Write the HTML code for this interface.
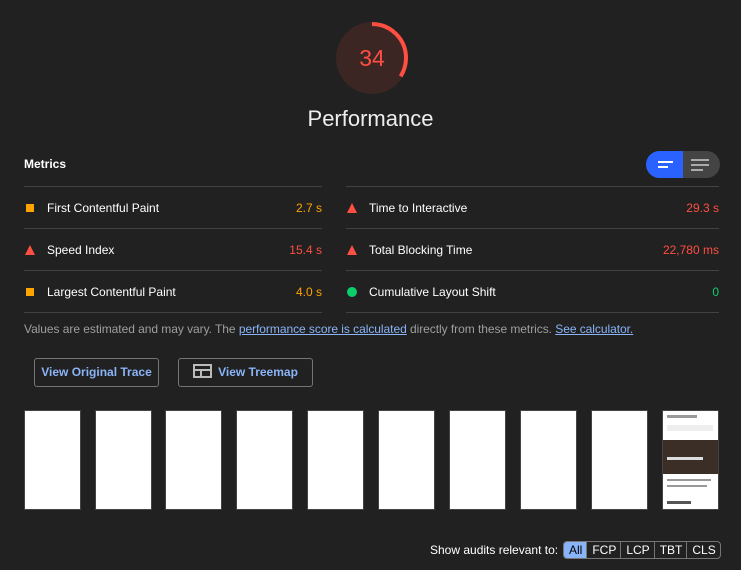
<!DOCTYPE html>
<html><head><style>
body{margin:0;width:741px;height:570px;background:#212121;font-family:"Liberation Sans",sans-serif;color:#fff;position:relative;overflow:hidden}
.a{position:absolute}
.row{position:absolute;font-size:12px;height:42px;line-height:42px;border-top:1px solid #424242}
.lbl{position:absolute;left:23px}
.val{position:absolute;right:0}
.sq{position:absolute;left:2px;top:17px;width:8px;height:8px;background:#ffa400}
.tri{position:absolute;left:1px;top:16px;width:0;height:0;border-left:5px solid transparent;border-right:5px solid transparent;border-bottom:10px solid #ff4e42}
.dot{position:absolute;left:1px;top:16px;width:10px;height:10px;border-radius:50%;background:#0cce6b}
.btn{position:absolute;border:1px solid #757575;border-radius:3px;color:#8ab4f8;font-weight:bold;font-size:12px;line-height:27px;text-align:center}
.fr{position:absolute;top:410px;width:55px;height:98px;background:#fff;border:1px solid #444}
.fb{display:inline-block;padding:0 4px 0 5px;border-left:1px solid #757575;line-height:16px}
</style></head><body>
<svg class="a" style="left:334px;top:20px" width="76" height="76" viewBox="0 0 76 76">
<circle cx="38" cy="38" r="36" fill="#3b2624"/>
<circle cx="38" cy="38" r="34" fill="none" stroke="#ff4e42" stroke-width="4" stroke-dasharray="72.6 300" transform="rotate(-90 38 38)"/>
<text x="38" y="46" fill="#ff4e42" font-size="23" text-anchor="middle" font-family="Liberation Sans">34</text>
</svg>
<div class="a" style="left:0;width:741px;top:106px;text-align:center;font-size:22px;color:#eee">Performance</div>
<div class="a" style="left:24px;top:157px;font-size:12px;font-weight:bold">Metrics</div>
<div class="a" style="left:646px;top:151px;width:74px;height:27px;border-radius:14px;background:#444;overflow:hidden">
<div class="a" style="left:0;top:0;width:37px;height:27px;background:#2962ff"></div>
<div class="a" style="left:12px;top:10px;width:15px;height:2px;background:#fff"></div>
<div class="a" style="left:12px;top:15px;width:10px;height:2px;background:#fff"></div>
<div class="a" style="left:45px;top:8px;width:18px;height:2px;background:#aaa"></div>
<div class="a" style="left:45px;top:13px;width:18px;height:2px;background:#aaa"></div>
<div class="a" style="left:45px;top:18px;width:12px;height:2px;background:#aaa"></div>
</div>
<div class="row" style="left:24px;width:298px;top:186px"><div class="sq"></div><span class="lbl">First Contentful Paint</span><span class="val" style="color:#ffa400">2.7 s</span></div>
<div class="row" style="left:24px;width:298px;top:228px"><div class="tri"></div><span class="lbl">Speed Index</span><span class="val" style="color:#ff4e42">15.4 s</span></div>
<div class="row" style="left:24px;width:298px;top:270px"><div class="sq"></div><span class="lbl">Largest Contentful Paint</span><span class="val" style="color:#ffa400">4.0 s</span></div>
<div class="row" style="left:346px;width:373px;top:186px"><div class="tri"></div><span class="lbl">Time to Interactive</span><span class="val" style="color:#ff4e42">29.3 s</span></div>
<div class="row" style="left:346px;width:373px;top:228px"><div class="tri"></div><span class="lbl">Total Blocking Time</span><span class="val" style="color:#ff4e42">22,780 ms</span></div>
<div class="row" style="left:346px;width:373px;top:270px"><div class="dot"></div><span class="lbl">Cumulative Layout Shift</span><span class="val" style="color:#0cce6b">0</span></div>
<div class="a" style="left:24px;top:312px;width:298px;border-top:1px solid #424242"></div>
<div class="a" style="left:346px;top:312px;width:373px;border-top:1px solid #424242"></div>
<div class="a" style="left:24px;top:322px;font-size:12px;color:#9e9e9e;letter-spacing:-0.05px">Values are estimated and may vary. The <span style="color:#8ab4f8;text-decoration:underline">performance score is calculated</span> directly from these metrics. <span style="color:#8ab4f8;text-decoration:underline">See calculator.</span></div>
<div class="btn" style="left:34px;top:358px;width:123px">View Original Trace</div>
<div class="btn" style="left:178px;top:358px;width:133px"><svg style="vertical-align:middle;margin-right:6px;margin-top:-3px" width="19" height="14"><rect x="1" y="1" width="17" height="12" fill="none" stroke="#bbb" stroke-width="2"/><line x1="1" y1="6" x2="18" y2="6" stroke="#bbb" stroke-width="2"/><line x1="8" y1="6" x2="8" y2="13" stroke="#bbb" stroke-width="2"/></svg>View Treemap</div>
<div class="fr" style="left:24px"></div><div class="fr" style="left:95px"></div><div class="fr" style="left:165px"></div><div class="fr" style="left:236px"></div><div class="fr" style="left:307px"></div><div class="fr" style="left:378px"></div><div class="fr" style="left:449px"></div><div class="fr" style="left:520px"></div><div class="fr" style="left:591px"></div>
<div class="fr" style="left:662px;overflow:hidden">
<div class="a" style="left:4px;top:4px;width:30px;height:3px;background:#999"></div>
<div class="a" style="left:4px;top:14px;width:46px;height:6px;background:#eee"></div>
<div class="a" style="left:0;top:29px;width:55px;height:34px;background:#3a2e26"></div>
<div class="a" style="left:4px;top:46px;width:36px;height:3px;background:#ddd"></div>
<div class="a" style="left:4px;top:68px;width:44px;height:2px;background:#999"></div>
<div class="a" style="left:4px;top:74px;width:40px;height:2px;background:#999"></div>
<div class="a" style="left:4px;top:90px;width:24px;height:3px;background:#555"></div>
</div>
<div class="a" style="left:430px;top:543px;font-size:12px">Show audits relevant to:</div>
<div class="a" style="left:563px;top:541px;border:1px solid #757575;border-radius:4px;font-size:12px;overflow:hidden;height:16px;white-space:nowrap"><span class="fb" style="border:0;background:#8ab4f8;color:#000">All</span><span class="fb">FCP</span><span class="fb">LCP</span><span class="fb">TBT</span><span class="fb">CLS</span></div>
</body></html>
